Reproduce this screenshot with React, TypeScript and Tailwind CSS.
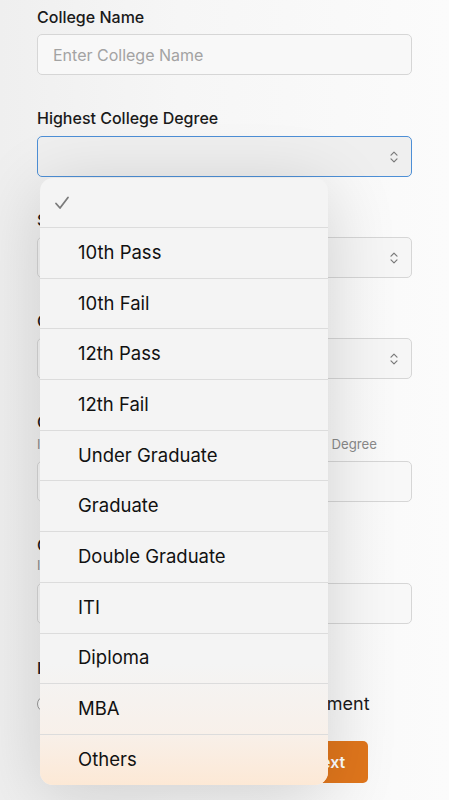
import React from 'react';

const degrees = [
  '10th Pass',
  '10th Fail',
  '12th Pass',
  '12th Fail',
  'Under Graduate',
  'Graduate',
  'Double Graduate',
  'ITI',
  'Diploma',
  'MBA',
  'Others',
];

function Chevrons() {
  return (
    <svg width="10" height="14" viewBox="0 0 10 14" fill="none" stroke="#7a7a7a" strokeWidth="1.2" strokeLinecap="round" strokeLinejoin="round">
      <path d="M2 5.2 L5 2.2 L8 5.2" />
      <path d="M2 8.8 L5 11.8 L8 8.8" />
    </svg>
  );
}

function Label({ children }: { children: React.ReactNode }) {
  return <label className="block text-[16px] leading-[20px] font-medium text-[#1a1a1a]">{children}</label>;
}

function SelectBox({ focused }: { focused?: boolean }) {
  return (
    <div
      className={`h-[41px] rounded-[5px] border flex items-center justify-end pr-[12px] ${
        focused ? 'border-[#4d8fd6] bg-[#efefef]' : 'border-[#d6d6d6] bg-[#f6f6f6]'
      }`}
    >
      <Chevrons />
    </div>
  );
}

export default function App() {
  return (
    <div
      className="relative w-[449px] h-[800px] overflow-hidden bg-[linear-gradient(90deg,#efefef_0%,#f6f6f6_40%,#fbfbfb_100%)]"
      style={{ fontFamily: 'Inter, "Noto Sans", sans-serif' }}
    >
      <div className="px-[37px] pt-[7px]">
        <div>
          <Label>College Name</Label>
          <div className="mt-[7px] h-[41px] rounded-[5px] border border-[#d6d6d6] bg-[#f8f8f8] flex items-center px-[15px]">
            <span className="text-[16px] text-[#a3a3a3]">Enter College Name</span>
          </div>
        </div>

        <div className="mt-[33px]">
          <Label>Highest College Degree</Label>
          <div className="mt-[8px]">
            <SelectBox focused />
          </div>
        </div>

        <div className="mt-[33px]">
          <Label>Specialization</Label>
          <div className="mt-[7px]">
            <SelectBox />
          </div>
        </div>

        <div className="mt-[33px]">
          <Label>Course Type</Label>
          <div className="mt-[7px]">
            <SelectBox />
          </div>
        </div>

        <div className="mt-[33px]">
          <Label>College Start Year</Label>
          <p className="whitespace-nowrap text-[13.2px] leading-[18px] mt-[3px] text-[#8a8a8a]">
            If pursuing, enter year in which you started the Degree
          </p>
          <div className="mt-[8px] h-[41px] rounded-[5px] border border-[#d6d6d6] bg-[#f8f8f8]" />
        </div>

        <div className="mt-[33px]">
          <Label>College End Year</Label>
          <p className="whitespace-nowrap text-[13px] leading-[18px] mt-[1px] text-[#8a8a8a]">If pursuing, enter expected year</p>
          <div className="mt-[9px] h-[41px] rounded-[5px] border border-[#d6d6d6] bg-[#f8f8f8]" />
        </div>

        <div className="mt-[34px]">
          <Label>Interested In</Label>
          <div className="mt-[15px] flex items-center text-[18px] leading-[22px] text-[#1a1a1a]">
            <span className="w-[16px] h-[16px] rounded-full border border-[#9a9a9a] bg-white" />
            <span className="ml-[10px]">Job</span>
            <span className="ml-[105px] w-[16px] h-[16px] rounded-full border border-[#9a9a9a] bg-white" />
            <span className="ml-[10px] whitespace-nowrap">Self Employment</span>
          </div>
        </div>

        <div className="mt-[26px] flex justify-end pr-[44px]">
          <button className="h-[42px] w-[82px] rounded-[5px] bg-[#e0761c] text-white text-[16px] font-semibold">
            Next
          </button>
        </div>
      </div>

      {/* native picker overlay */}
      <div className="absolute left-[40px] top-[178px] w-[288px] h-[607px] rounded-[13px] overflow-hidden bg-[#f4f4f4] shadow-[0_12px_70px_rgba(0,0,0,0.16)]">
        <div className="absolute inset-0 bg-[linear-gradient(0deg,rgba(253,232,212,0.95)_0%,rgba(250,238,228,0.6)_9%,rgba(244,244,244,0)_20%)]" />
        <div className="relative">
          <div className="h-[49px] flex items-center pl-[14px]">
            <svg width="16" height="14" viewBox="0 0 16 14" fill="none" stroke="#7b7b7b" strokeWidth="1.8" strokeLinecap="round" strokeLinejoin="round">
              <path d="M2 7.5 L6 12 L14 1.5" />
            </svg>
          </div>
          {degrees.map((d) => (
            <div key={d} className="h-[50.7px] border-t border-[#dcdcdc] flex items-center pl-[38px] text-[18.5px] text-[#111111]">
              {d}
            </div>
          ))}
        </div>
      </div>
    </div>
  );
}
